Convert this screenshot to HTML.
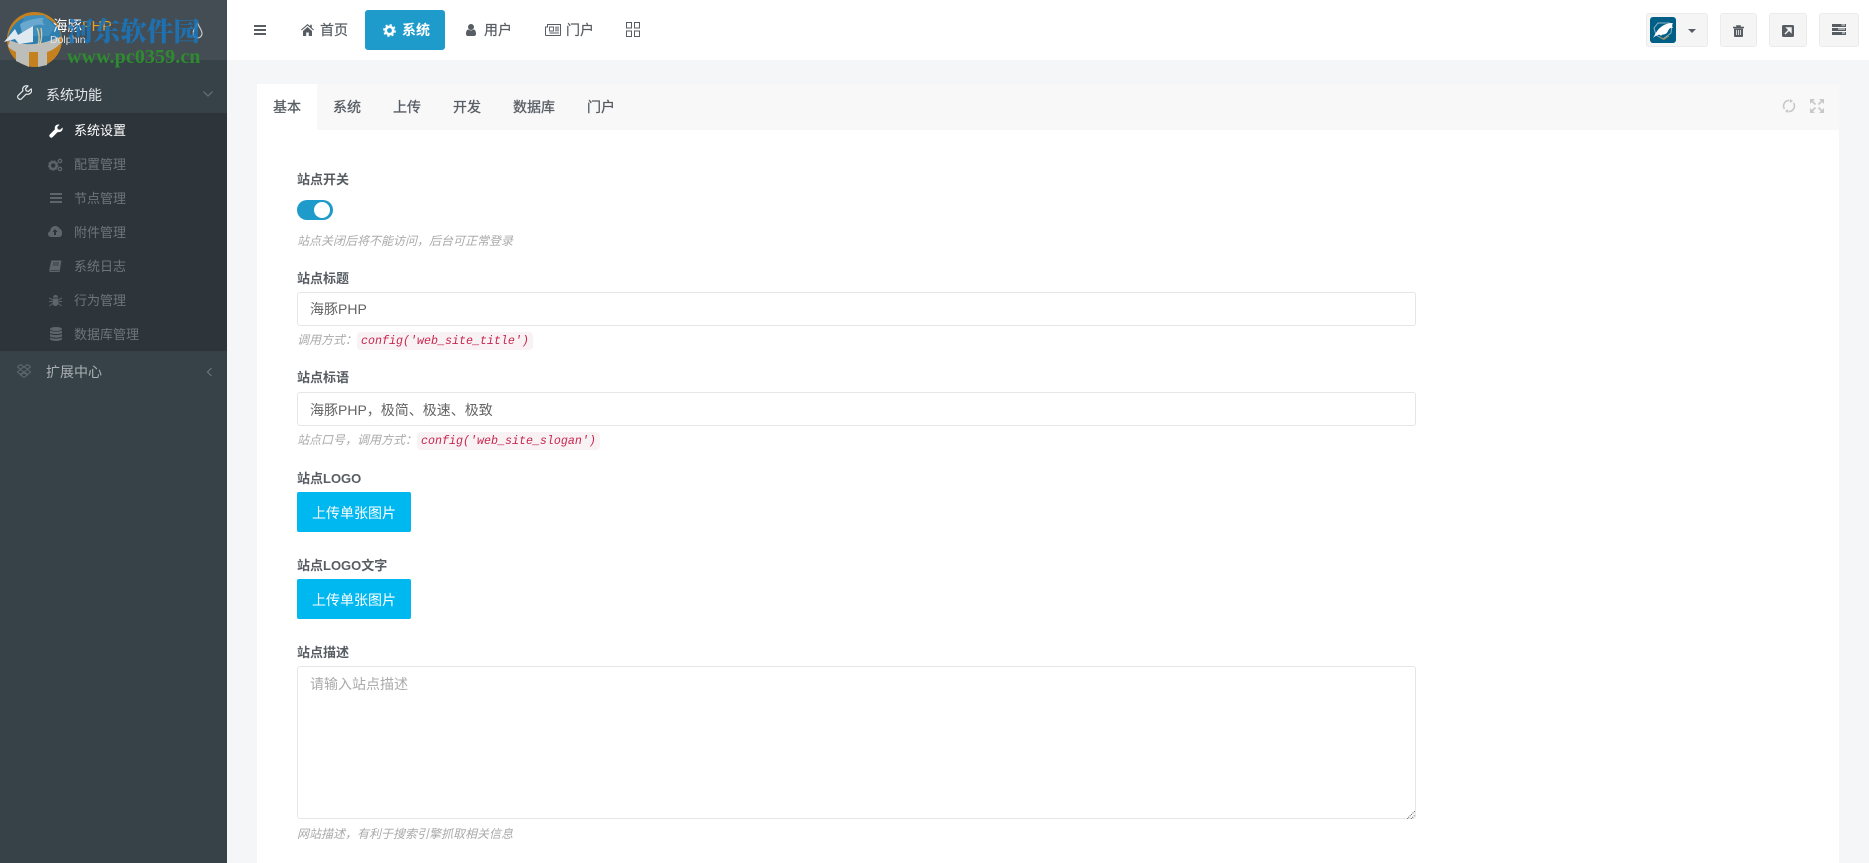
<!DOCTYPE html>
<html lang="zh-CN">
<head>
<meta charset="utf-8">
<title>海豚PHP</title>
<style>
html,body{margin:0;padding:0;width:1869px;height:863px;overflow:hidden;background:#f5f6f8}
body{position:relative;font-family:"Liberation Sans","Noto Sans CJK SC",sans-serif;color:#575d63;font-size:14px}
.a{position:absolute;white-space:nowrap}
svg{position:absolute;display:block}
#side{position:absolute;left:0;top:0;width:227px;height:863px;background:#364248}
.sub{font-size:13px;color:#6d7579;left:74px;height:34px;line-height:34px}
.lb{left:297px;font-size:13px;font-weight:700;color:#575d63;height:20px;line-height:20px}
.hint{left:297px;font-size:12px;font-style:italic;color:#aaa;height:20px;line-height:20px}
.inp{left:297px;width:1117px;height:32px;border:1px solid #e6e6e6;border-radius:3px;background:#fff}
.btn{left:297px;width:114px;height:40px;line-height:42px;text-align:center;background:#00b8f0;border-radius:2px;color:#fff;font-size:14px}
.code{display:inline-block;font-family:"Liberation Mono",monospace;font-style:italic;font-size:11.67px;color:#c7254e;background:#f9f2f4;border-radius:4px;padding:0 4px;line-height:18px}
.nav{font-size:14px;top:20px;height:20px;line-height:20px;color:#575d63;-webkit-text-stroke:.2px #575d63}
.tab{top:84px;height:46px;line-height:46px;font-size:14px;color:#575d63;-webkit-text-stroke:.3px #575d63}
.tb{top:13px;height:32px;background:#f5f5f5;border:1px solid #ebebeb;border-radius:3px}
</style>
</head>
<body>

<div id="side"></div>
<div class="a" style="left:0;top:0;width:227px;height:60px;background:#444d53"></div>
<div class="a" style="left:0;top:113px;width:227px;height:238px;background:#2d353a"></div>

<!-- watermark logo -->
<svg style="left:0;top:0" width="70" height="70" viewBox="0 0 70 70">
<circle cx="34.500" cy="39.500" r="27.500" fill="#c6811f"/>
<path d="M7.500 40A27.500 27.500 0 0 1 61.500 36C52 42 44 45 32 46 22 47 14 46 7.500 40z" fill="#2e7fb0"/>
<path d="M25 16L44 15 55 27 49 36 30 36 20 27z" fill="#3f8dbb"/>
<path d="M8 46L10 40C20 46 42 46 58 37L61 43C54 50 50 51 47 52V65L38 67V52H29V67L16 61V52C12 50 9 48 8 46z" fill="#bdbdb9"/>
<path d="M20 24C27 20 36 18 44 18 41 21 43 23 45 25 39 24 35 25 31 27L22 33z" fill="#6aa8cf"/>
<path d="M4 42L15 29 18 35 33 26V42L19 44 15 39z" fill="#dfe9ef"/>
<path d="M37 28c2 4 3 11 1 17M41 28c1 5 1 11-1 16" stroke="#dcc894" stroke-width="1.300" fill="none"/>
</svg>

<!-- logo text -->
<div class="a" style="left:53px;top:18px;font-size:14.500px;line-height:18px;color:#fff">海豚<span style="color:#f0a020">PHP</span></div>
<div class="a" style="left:50px;top:34px;font-size:10.500px;line-height:12px;color:#dfe3e6">Dolphin</div>
<svg style="left:192px;top:22px" width="11" height="17" viewBox="0 0 11 17"><path d="M5.500 1C4 5 1 8 1 11.500a4.500 4.500 0 0 0 9 0C10 8 7 5 5.500 1z" fill="none" stroke="#c3cbd0" stroke-width="1.200"/></svg>

<div class="a" style="left:67px;top:10px;font-family:'Noto Serif CJK SC','Liberation Serif',serif;font-weight:900;font-size:26.600px;line-height:40px;color:#1a75bb;opacity:.88">河东软件园</div>
<div class="a" style="left:67px;top:47px;font-family:'Liberation Serif',serif;font-weight:700;font-size:20px;line-height:20px;letter-spacing:.1px;color:#2e8b2e">www.pc0359.cn</div>

<!-- sidebar main -->
<svg style="left:17px;top:85px" width="15" height="15" viewBox="0 0 16 16"><path d="M15 4.200l-2.800 2.700-2.400-.7-.7-2.400L11.800 1C9.800.3 7.500 1 6.500 2.900c-.6 1.100-.6 2.300-.2 3.300L1.200 11.300c-.7.700-.7 1.900 0 2.700l.8.800c.8.700 2 .7 2.700 0l5.100-5.100c2.800.9 5.900-1 5.900-4.200 0-.5-.2-1-.7-1.300z" fill="none" stroke="#e6e9eb" stroke-width="1.300" stroke-linejoin="round"/></svg>
<div class="a" style="left:46px;top:85px;font-size:14px;line-height:20px;color:#e4e7e9">系统功能</div>
<svg style="left:202px;top:90px" width="12" height="8" viewBox="0 0 12 8"><path d="M1.500 1.500L6 6l4.500-4.500" fill="none" stroke="#667177" stroke-width="1.200"/></svg>

<svg style="left:49px;top:124px" width="14" height="14" viewBox="0 0 14 14"><path d="M13.500 3.500l-2.500 2.300-2.200-.5-.6-2.200L10.500.7C8.700.1 6.700.9 6 2.600c-.4 1-.3 1.900 0 2.700L.8 10.500c-.7.700-.7 1.700 0 2.300l.4.400c.7.700 1.700.7 2.300 0l5.200-5.200c2.500.7 5-1 5-3.600 0-.3-.1-.6-.2-.9z" fill="#fff"/></svg>
<div class="a sub" style="top:114px;color:#fff">系统设置</div>

<svg style="left:48px;top:158px" width="15" height="14" viewBox="0 0 15 14"><circle cx="5.200" cy="7.500" r="3.400" fill="none" stroke="#5d666b" stroke-width="2.300"/><circle cx="5.200" cy="7.500" r="4.800" fill="none" stroke="#5d666b" stroke-width="1" stroke-dasharray="1.800 1.500"/><circle cx="12" cy="3" r="1.700" fill="none" stroke="#5d666b" stroke-width="1.300"/><circle cx="12" cy="11" r="1.700" fill="none" stroke="#5d666b" stroke-width="1.300"/></svg>
<div class="a sub" style="top:148px">配置管理</div>

<svg style="left:50px;top:193px" width="12" height="10" viewBox="0 0 12 10"><path d="M0 0h12v2H0zM0 4h12v2H0zM0 8h12v2H0z" fill="#5d666b"/></svg>
<div class="a sub" style="top:182px">节点管理</div>

<svg style="left:48px;top:226px" width="14" height="11" viewBox="0 0 14 11"><path d="M3.200 11C1.400 11 0 9.700 0 8c0-1.300.9-2.500 2.200-2.900C2.300 2.300 4.500 0 7.200 0c2 0 3.700 1.100 4.500 2.800 1.300.5 2.300 1.800 2.300 3.300 0 .1 0 .2 0 .4V8c0 1.700-1.400 3-3.200 3z" fill="#5d666b"/><path d="M7 3L4.500 6H6v3h2V6h1.500z" fill="#2d353a"/></svg>
<div class="a sub" style="top:216px">附件管理</div>

<svg style="left:49px;top:260px" width="13" height="13" viewBox="0 0 13 13"><path d="M2.500 .5h10L10.500 12H1.500C.5 12 0 11.200 .2 10.200L2 2C2.100 1.200 2.200 .5 2.500 .5z" fill="#5d666b"/><path d="M1.500 10.300h8.500M4 3h6M3.700 5h6" stroke="#2d353a" stroke-width=".7"/></svg>
<div class="a sub" style="top:250px">系统日志</div>

<svg style="left:49px;top:294px" width="13" height="13" viewBox="0 0 13 13"><path d="M4 3.500a2.500 2.500 0 0 1 5 0z" fill="#5d666b"/><path d="M3.500 4.500h6V9a3 3 0 0 1-6 0z" fill="#5d666b"/><path d="M0 4l3 1.500M13 4l-3 1.500M0 7.500h3M13 7.500h-3M.5 12L3.500 9.500M12.500 12L9.500 9.500" stroke="#5d666b" stroke-width="1"/></svg>
<div class="a sub" style="top:284px">行为管理</div>

<svg style="left:50px;top:327px" width="12" height="14" viewBox="0 0 12 14"><ellipse cx="6" cy="2" rx="6" ry="2" fill="#5d666b"/><path d="M0 3.500c2 1.500 10 1.500 12 0v2.400c-2 1.600-10 1.600-12 0zM0 7c2 1.500 10 1.500 12 0v2.400c-2 1.600-10 1.600-12 0zM0 10.500c2 1.500 10 1.500 12 0V12c-1 2.600-11 2.600-12 0z" fill="#5d666b"/></svg>
<div class="a sub" style="top:318px">数据库管理</div>

<svg style="left:17px;top:364px" width="14" height="14" viewBox="0 0 14 14"><path d="M3.500 .5L6.800 2.800 3.500 5.200 .2 2.800zM10.500 .5L13.800 2.800 10.500 5.200 7.200 2.800zM3.500 5.600L6.800 8 3.500 10.300 .2 8zM10.500 5.600L13.800 8 10.500 10.300 7.200 8zM3.500 11L7 8.800 10.500 11 7 13.500z" fill="none" stroke="#5d686e" stroke-width="1"/></svg>
<div class="a" style="left:46px;top:362px;font-size:14px;line-height:20px;color:#aab0b4">扩展中心</div>
<svg style="left:206px;top:367px" width="7" height="10" viewBox="0 0 7 10"><path d="M5.500 1L1.500 5l4 4" fill="none" stroke="#6a7378" stroke-width="1.200"/></svg>

<!-- header -->
<div class="a" style="left:227px;top:0;width:1642px;height:60px;background:#fff"></div>
<svg style="left:254px;top:25px" width="12" height="10" viewBox="0 0 12 10"><path d="M0 0h12v2H0zM0 4h12v2H0zM0 8h12v2H0z" fill="#575d63"/></svg>

<svg style="left:301px;top:24px" width="13" height="12" viewBox="0 0 13 12"><path d="M6.500 0L0 5.600l.7.800L6.500 1.500l5.800 4.900.7-.8L10.800 3.700V.8H9.200v1.500zM2 7v5h3.200V8.500h2.600V12H11V7L6.500 3z" fill="#575d63"/></svg>
<div class="a nav" style="left:320px">首页</div>

<div class="a" style="left:365px;top:10px;width:80px;height:40px;background:#1e9acb;border-radius:3px"></div>
<svg style="left:383px;top:24px" width="13" height="13" viewBox="0 0 13 13"><circle cx="6.500" cy="6.500" r="3.700" fill="none" stroke="#fff" stroke-width="2.600"/><circle cx="6.500" cy="6.500" r="5.600" fill="none" stroke="#fff" stroke-width="1.600" stroke-dasharray="2.200 2.200"/></svg>
<div class="a nav" style="left:402px;color:#fff;font-weight:700;-webkit-text-stroke:0">系统</div>

<svg style="left:466px;top:24px" width="10" height="12" viewBox="0 0 10 12"><circle cx="5" cy="3" r="3" fill="#575d63"/><path d="M0 10c0-3 1-4.500 2.500-4.500.8.600 1.600.9 2.500.9s1.700-.3 2.500-.9C9 5.500 10 7 10 10c0 1.300-.8 2-2 2H2c-1.200 0-2-.7-2-2z" fill="#575d63"/></svg>
<div class="a nav" style="left:484px">用户</div>

<svg style="left:545px;top:24px" width="16" height="12" viewBox="0 0 16 12"><path d="M2.500.5h13v10.200a.8.800 0 0 1-.8.800H1.300a.8.800 0 0 1-.8-.8V3h2z" fill="none" stroke="#575d63"/><path d="M4.500 3h4v4h-4z" fill="none" stroke="#575d63" stroke-width=".9"/><path d="M10 3.200h4M10 5h4M10 6.800h4M4.500 9h9.500" stroke="#575d63" stroke-width=".9"/></svg>
<div class="a nav" style="left:566px">门户</div>

<svg style="left:626px;top:22px" width="14" height="15" viewBox="0 0 14 15"><path d="M.5.500h5v5.500h-5zM8.500.500h5v5.500h-5zM.5 9h5v5.500h-5zM8.500 9h5v5.500h-5z" fill="none" stroke="#575d63"/></svg>

<!-- right header -->
<div class="a tb" style="left:1646px;width:60px"></div>
<div class="a" style="left:1650px;top:17px;width:26px;height:26px;background:#005f87;border-radius:3px"></div>
<svg style="left:1651px;top:18px" width="24" height="24" viewBox="0 0 24 24"><path d="M7 5h11l3 1-1 9-8 6-7-4-2-7z" fill="none" stroke="#8fb3c6" stroke-width="1"/><path d="M2 20C5 15 6 12 10 9c3-2.500 7-4 12-4-1.500 2-1 3.500 0 5-3-.5-4 1-5 3-1 2.500-3 3.500-5 3.500-1 0-1.500.5-2 1.500-.5-1-1.500-1.500-3-1-2 .5-3.500 1.500-5 3z" fill="#fff"/><path d="M9 19l4 2.500 5-3.500" fill="none" stroke="#b08a3a" stroke-width=".9"/></svg>
<svg style="left:1688px;top:29px" width="8" height="4" viewBox="0 0 8 4"><path d="M0 0h8L4 4z" fill="#575d63"/></svg>
<div class="a tb" style="left:1720px;width:35px"></div>
<svg style="left:1733px;top:25px" width="11" height="12" viewBox="0 0 11 12"><path d="M0 2h11v1H0zM3.500 2V.5h4V2" fill="#575d63" stroke="#575d63" stroke-width=".6"/><path d="M1 3.500h9V11a1 1 0 0 1-1 1H2a1 1 0 0 1-1-1z" fill="#575d63"/><path d="M3.500 5v5M5.500 5v5M7.500 5v5" stroke="#f5f5f5" stroke-width=".8"/></svg>
<div class="a tb" style="left:1769px;width:36px"></div>
<svg style="left:1782px;top:25px" width="12" height="12" viewBox="0 0 12 12"><rect width="12" height="12" rx="1.500" fill="#575d63"/><path d="M3 9l4.500-4.500M5 3h4v4z" stroke="#f5f5f5" stroke-width="1.400" fill="#f5f5f5"/></svg>
<div class="a tb" style="left:1819px;width:38px"></div>
<svg style="left:1832px;top:24px" width="14" height="11" viewBox="0 0 14 11"><path d="M0 0h14v3H0zM0 4h14v3H0zM0 8h14v3H0z" fill="#575d63"/><path d="M9.500 1h3.500M6 5h7M10 9h3" stroke="#f5f5f5" stroke-width=".9"/></svg>

<!-- card -->
<div class="a" style="left:257px;top:84px;width:1582px;height:779px;background:#fff"></div>
<div class="a" style="left:257px;top:84px;width:1582px;height:46px;background:#f8f8f9"></div>
<div class="a" style="left:257px;top:84px;width:60px;height:46px;background:#fff"></div>
<div class="a tab" style="left:273px">基本</div>
<div class="a tab" style="left:333px">系统</div>
<div class="a tab" style="left:393px">上传</div>
<div class="a tab" style="left:453px">开发</div>
<div class="a tab" style="left:513px">数据库</div>
<div class="a tab" style="left:587px">门户</div>

<svg style="left:1782px;top:99px" width="14" height="14" viewBox="0 0 14 14"><path d="M7.500 1.500A5.500 5.500 0 0 0 2.500 10M6.500 12.500A5.500 5.500 0 0 0 11.500 4" fill="none" stroke="#c8c8c8" stroke-width="1.600"/><path d="M8 0L11 2 8 4zM6 10L3 12 6 14z" fill="#c8c8c8" transform="rotate(180 7 7)"/></svg>
<svg style="left:1810px;top:99px" width="14" height="14" viewBox="0 0 14 14"><path d="M0 0h5L0 5zM14 0v5L9 0zM0 14V9L5 14zM14 14H9L14 9z" fill="#c8c8c8"/><path d="M2 2l3.500 3.500M12 2L8.500 5.500M2 12l3.500-3.500M12 12L8.500 8.500" stroke="#c8c8c8" stroke-width="1.600"/></svg>

<!-- form -->
<div class="a lb" style="top:170px">站点开关</div>
<div class="a" style="left:297px;top:200px;width:36px;height:20px;background:#1e9acb;border-radius:10px"></div>
<div class="a" style="left:314px;top:202px;width:16px;height:16px;background:#fff;border-radius:50%"></div>
<div class="a hint" style="top:231px">站点关闭后将不能访问，后台可正常登录</div>

<div class="a lb" style="top:269px">站点标题</div>
<div class="a inp" style="top:292px"></div>
<div class="a" style="left:310px;top:299px;line-height:20px;font-size:14px;color:#646464">海豚PHP</div>
<div class="a hint" style="top:330px">调用方式：<span class="code">config('web_site_title')</span></div>

<div class="a lb" style="top:368px">站点标语</div>
<div class="a inp" style="top:392px"></div>
<div class="a" style="left:310px;top:400px;line-height:20px;font-size:14px;color:#646464">海豚PHP，极简、极速、极致</div>
<div class="a hint" style="top:430px">站点口号，调用方式：<span class="code">config('web_site_slogan')</span></div>

<div class="a lb" style="top:469px">站点LOGO</div>
<div class="a btn" style="top:492px">上传单张图片</div>

<div class="a lb" style="top:556px">站点LOGO文字</div>
<div class="a btn" style="top:579px">上传单张图片</div>

<div class="a lb" style="top:643px">站点描述</div>
<div class="a" style="left:297px;top:666px;width:1117px;height:151px;border:1px solid #e6e6e6;border-radius:3px;background:#fff"></div>
<div class="a" style="left:310px;top:674px;line-height:20px;font-size:14px;color:#aaa">请输入站点描述</div>
<svg style="left:1407px;top:811px" width="8" height="8" viewBox="0 0 8 8"><path d="M0 8L8 0M4 8L8 4" stroke="#555" stroke-width="1" stroke-dasharray="1 1"/></svg>
<div class="a hint" style="top:824px">网站描述，有利于搜索引擎抓取相关信息</div>

</body>
</html>
